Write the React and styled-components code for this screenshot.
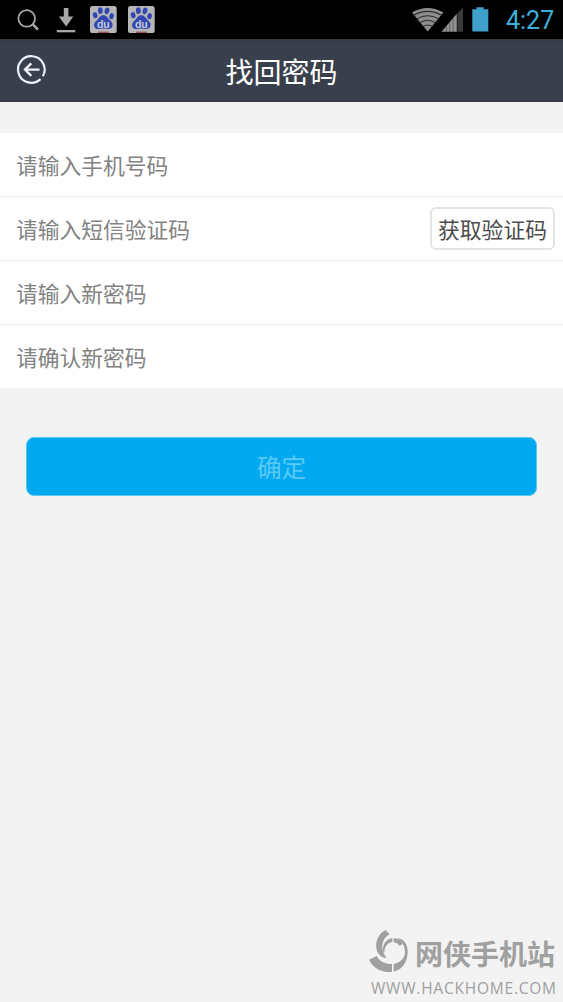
import React from "react";
import styled, { createGlobalStyle } from "styled-components";

const GlobalStyle = createGlobalStyle`
  * {
    box-sizing: border-box;
  }

  body {
    margin: 0;
    background: #f3f3f3;
    font-family: "Liberation Sans", "Noto Sans CJK SC", sans-serif;
  }
`;

const Screen = styled.div`
  display: flex;
  flex-direction: column;
  width: 100%;
  height: 1002px;
  overflow: hidden;
  background: #f3f3f3;
`;

const StatusBar = styled.div`
  display: flex;
  justify-content: space-between;
  height: 39px;
  flex-shrink: 0;
  background: #000;
`;

const Clock = styled.span`
  width: 63px;
  padding-left: 6px;
  font-family: Roboto, sans-serif;
  font-size: 25px;
  line-height: 41px;
  color: #3fb0dc;
`;

const StatusGroup = styled.div`
  display: flex;
`;

const Header = styled.header`
  display: grid;
  grid-template-columns: 60px 1fr 60px;
  align-items: center;
  height: 63px;
  flex-shrink: 0;
  background: linear-gradient(#343a42 0, #3a3f4d 5px, #3a3f4d 58px, #3c3c4b 63px);
`;

const BackButton = styled.button`
  height: 63px;
  padding: 0;
  border: 0;
  background: none;

  svg {
    display: block;
  }
`;

const Title = styled.h1`
  margin: 0;
  font-family: "Noto Sans CJK SC", sans-serif;
  font-size: 28px;
  font-weight: 400;
  line-height: 40px;
  text-align: center;
  color: #fff;
`;

const Form = styled.form`
  display: flex;
  flex-direction: column;
  padding-top: 31px;
`;

const Row = styled.div`
  display: flex;
  align-items: center;
  height: ${(props) => (props.$last ? "63px" : "64px")};
  padding: 0 8px 0 16px;
  background: #fff;
  border-bottom: ${(props) => (props.$last ? "0" : "1px solid #ebebeb")};
`;

const Field = styled.input`
  flex: 1;
  min-width: 0;
  height: 40px;
  padding: 0;
  border: 0;
  outline: none;
  background: transparent;
  font-family: "Noto Sans CJK SC", sans-serif;
  font-size: 21.75px;
  color: #444;

  &::placeholder {
    color: #828282;
    opacity: 1;
  }
`;

const CodeButton = styled.button`
  width: 125px;
  height: 43px;
  padding: 0;
  border: 2px solid #e4e4e4;
  border-radius: 6px;
  background: #fff;
  font-family: "Noto Sans CJK SC", sans-serif;
  font-size: 21.8px;
  line-height: 37px;
  white-space: nowrap;
  color: #4c4c4c;
`;

const SubmitButton = styled.button`
  height: 59px;
  margin: 49px 26px 0 26px;
  padding: 0 0 2px;
  border: 1px solid #5cc8f0;
  border-radius: 8px;
  background: #02a9f0;
  font-family: "Noto Sans CJK SC", sans-serif;
  font-size: 24.6px;
  color: #5cc9f5;
`;

const Watermark = styled.footer`
  display: grid;
  grid-template-columns: 47px 141px;
  margin: auto 7px 0 auto;
  color: #a0a0a0;
`;

const SiteName = styled.div`
  height: 47px;
  font-family: "Noto Sans CJK SC", sans-serif;
  font-size: 28px;
  font-weight: 700;
  line-height: 48px;
  white-space: nowrap;
`;

const SiteUrl = styled.div`
  grid-column: 1 / 3;
  height: 26px;
  padding-left: 3px;
  font-family: "Open Sans", sans-serif;
  font-size: 15.5px;
  font-weight: 500;
  line-height: 25px;
  letter-spacing: 0.78px;
  white-space: nowrap;
`;

const fields = [
  { name: "phone", placeholder: "请输入手机号码" },
  { name: "code", placeholder: "请输入短信验证码", action: "获取验证码" },
  { name: "password", placeholder: "请输入新密码" },
  { name: "confirm", placeholder: "请确认新密码" },
];

const SearchIcon = () => (
  <svg width="52" height="39" viewBox="0 0 52 39" fill="none" stroke="#a8a8a8">
    <circle cx="26.7" cy="18.4" r="8.3" strokeWidth="1.8" />
    <path d="M32.8 24.3 38 29.6" strokeWidth="2.6" />
  </svg>
);

const DownloadIcon = () => (
  <svg width="34" height="39" viewBox="52 0 34 39" fill="#a8a8a8">
    <path d="M63.8 8h4.6v8.6h4.9l-7.2 9.8-7.2-9.8h4.9z" />
    <path d="M56.8 30h18.4v2.3H56.8z" />
  </svg>
);

const PawIcon = () => (
  <svg width="37.5" height="39" viewBox="86 0 37.5 39">
    <rect x="90" y="6" width="26.7" height="27" rx="2.6" fill="#b6b6b6" />
    <g fill="#3047b4">
      <ellipse cx="95.2" cy="15.2" rx="2.3" ry="3.1" transform="rotate(-12 95.2 15.2)" />
      <ellipse cx="100.3" cy="10.6" rx="2.4" ry="3.4" />
      <ellipse cx="107" cy="10.8" rx="2.4" ry="3.4" transform="rotate(12 107 10.8)" />
      <ellipse cx="111.6" cy="16.2" rx="2.3" ry="3.1" transform="rotate(10 111.6 16.2)" />
      <path d="M103.3 15.3c3 0 4.2 2.4 5.6 4 1.7 1.9 4.2 3.3 3.7 6.3-.4 2.6-2.5 3.6-4.7 3.5-1.6-.1-3-.6-4.6-.6s-3 .5-4.6.6c-2.4.1-4.5-1.2-4.7-3.7-.2-2.8 2.1-4.1 3.8-6.1 1.4-1.6 2.5-4 5.5-4z" />
    </g>
    <text x="103.3" y="27.6" fill="#c7cbd5" fontFamily="Liberation Sans, sans-serif" fontSize="10.5" fontWeight="700" textAnchor="middle">
      du
    </text>
    <path d="M98 31.6h11V33H98z" fill="#985465" />
  </svg>
);

const WifiIcon = () => (
  <svg width="32" height="39" viewBox="411 0 32 39">
    <path d="M412 12.6q15.7-9 31.4 0L427.7 31.6z" fill="#8d8d8d" />
    <g fill="none" stroke="#2c2c2c" strokeWidth="1.1">
      <path d="M413.4 15.5q14.3-8.2 28.6 0" />
      <path d="M416.4 19.1q11.3-6.8 22.6 0" />
      <path d="M419.5 22.9q8.2-5.2 16.4 0" />
      <path d="M422.6 26.6q5.1-3.3 10.2 0" />
    </g>
  </svg>
);

const SignalIcon = () => (
  <svg width="29" height="39" viewBox="443 0 29 39" overflow="visible">
    <path d="M441.5 31.7 456.8 13.8v17.9z" fill="#929292" />
    <path d="M457.8 12.8 463 7.4v24.3h-5.2z" fill="#393939" />
    <path d="M446.4 27v5M449.8 23v9M453.2 19v13M457.3 13v19" stroke="#444" strokeWidth=".6" />
  </svg>
);

const BatteryIcon = () => (
  <svg width="28" height="39" viewBox="472 0 28 39" fill="#3fa0cb">
    <path d="M476.5 7.3h7.2v1.9h4.6v22.4h-16V9.2h4.2z" />
  </svg>
);

const BackIcon = () => (
  <svg width="60" height="63" viewBox="0 39 60 63" fill="none" stroke="#eef0fa" strokeWidth="2.2">
    <path d="M40.5 79.1A13.3 13.3 0 1 1 42.8 76.2" />
    <path d="M39.6 69.6H25.5M31.3 63.3 25 69.6l6.3 6.3" strokeWidth="2.4" />
  </svg>
);

const SiteLogo = () => (
  <svg width="41" height="44" viewBox="24 21 123 132" fill="#a0a0a0">
    <path d="M76 24 89 37C66 48 58 80 80 108 68 108 56 100 51 86 43 62 54 36 76 24z" />
    <path d="M27 113 50 102C58 118 76 127 96 126V150C62 152 38 136 27 113z" />
    <path d="M69 88C67 67 79 50 97 49V60C84 62 74 71 73 92z" />
    <path d="M101 49C115 49 125 57 128 66L118 71C113 63 107 61 101 61z" />
    <path d="M112 48C132 50 144 68 143 92 142 122 124 144 101 149V126C122 122 136 108 135 88 134 70 126 57 112 48z" />
  </svg>
);

const App = () => {
  return (
    <>
      <GlobalStyle />
      <Screen>
        <StatusBar>
          <StatusGroup>
            <SearchIcon />
            <DownloadIcon />
            <PawIcon />
            <PawIcon />
          </StatusGroup>
          <StatusGroup>
            <WifiIcon />
            <SignalIcon />
            <BatteryIcon />
            <Clock>4:27</Clock>
          </StatusGroup>
        </StatusBar>
        <Header>
          <BackButton type="button" aria-label="返回">
            <BackIcon />
          </BackButton>
          <Title>找回密码</Title>
        </Header>
        <Form>
          {fields.map((field, index) => (
            <Row key={field.name} $last={index === fields.length - 1}>
              <Field name={field.name} placeholder={field.placeholder} />
              {field.action && <CodeButton type="button">{field.action}</CodeButton>}
            </Row>
          ))}
          <SubmitButton type="button">确定</SubmitButton>
        </Form>
        <Watermark>
          <SiteLogo />
          <SiteName>网侠手机站</SiteName>
          <SiteUrl>WWW.HACKHOME.COM</SiteUrl>
        </Watermark>
      </Screen>
    </>
  );
};

export default App;
